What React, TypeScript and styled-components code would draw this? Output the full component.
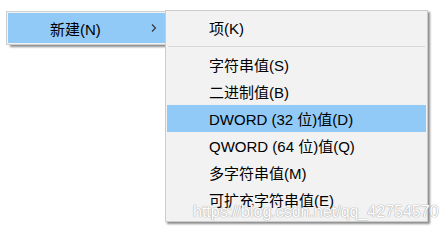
import React from "react";
import styled, { createGlobalStyle } from "styled-components";

const Global = createGlobalStyle`
  html, body { margin: 0; padding: 0; background: #ffffff; }
  body { width: 445px; height: 236px; overflow: hidden; }
`;

const FONT = `"Liberation Sans", "Noto Sans CJK SC", sans-serif`;

const Stage = styled.div`
  position: relative;
  width: 445px;
  height: 236px;
  display: flex;
  align-items: flex-start;
  padding: 11px 0 0 6px;
  box-sizing: border-box;
  font-family: ${FONT};
  font-size: 15px;
  color: #000;
`;

const ParentMenu = styled.div`
  width: 157px;
  background: #f2f2f2;
  border: 1px solid #cfcfcf;
  border-right: none;
  padding: 1px 0 1px 1px;
  box-shadow: 3px 3px 2px -1px rgba(0, 0, 0, 0.45);
`;

const ParentItem = styled.div`
  height: 30px;
  background: #91c9f7;
  display: flex;
  align-items: center;
  padding-left: 42px;
  padding-right: 5px;
  box-sizing: border-box;
`;

const Label = styled.span`
  flex: 1;
  white-space: nowrap;
`;

const Chevron = styled.svg`
  width: 8px;
  height: 10px;
  margin-right: 2px;
`;

const SubMenu = styled.div`
  width: 259px;
  margin-top: -1px;
  background: #f2f2f2;
  border: 1px solid #cccccc;
  padding: 3px 1px 8px 1px;
  box-shadow: 2px 2px 2px rgba(0, 0, 0, 0.45);
  display: flex;
  flex-direction: column;
`;

const Item = styled.div<{ $active?: boolean }>`
  height: 27px;
  display: flex;
  align-items: center;
  padding-left: 42px;
  background: ${(p) => (p.$active ? "#91c9f7" : "transparent")};
  white-space: nowrap;
`;

const Separator = styled.div`
  height: 1px;
  background: #d7d7d7;
  margin: 5px 1px 4px 1px;
`;

const Watermark = styled.div`
  position: absolute;
  left: 193px;
  top: 203px;
  font-family: "Liberation Sans", sans-serif;
  font-size: 16px;
  color: #ffffff;
  text-shadow: 0 0 1px #b0b0b0, 0 0 1px #b0b0b0, 0 0 1px #b0b0b0;
  white-space: nowrap;
  pointer-events: none;
`;

const items: { label: string; active?: boolean }[] = [
  { label: "字符串值(S)" },
  { label: "二进制值(B)" },
  { label: "DWORD (32 位)值(D)", active: true },
  { label: "QWORD (64 位)值(Q)" },
  { label: "多字符串值(M)" },
  { label: "可扩充字符串值(E)" },
];

export default function App() {
  return (
    <>
      <Global />
      <Stage>
        <ParentMenu>
          <ParentItem>
            <Label>新建(N)</Label>
            <Chevron viewBox="0 0 8 10">
              <path d="M2 1.5 L5.5 5 L2 8.5" fill="none" stroke="#333" strokeWidth="1.1" />
            </Chevron>
          </ParentItem>
        </ParentMenu>
        <SubMenu>
          <Item>项(K)</Item>
          <Separator />
          {items.map((it) => (
            <Item key={it.label} $active={it.active}>
              {it.label}
            </Item>
          ))}
        </SubMenu>
        <Watermark>https://blog.csdn.net/qq_42754570</Watermark>
      </Stage>
    </>
  );
}
